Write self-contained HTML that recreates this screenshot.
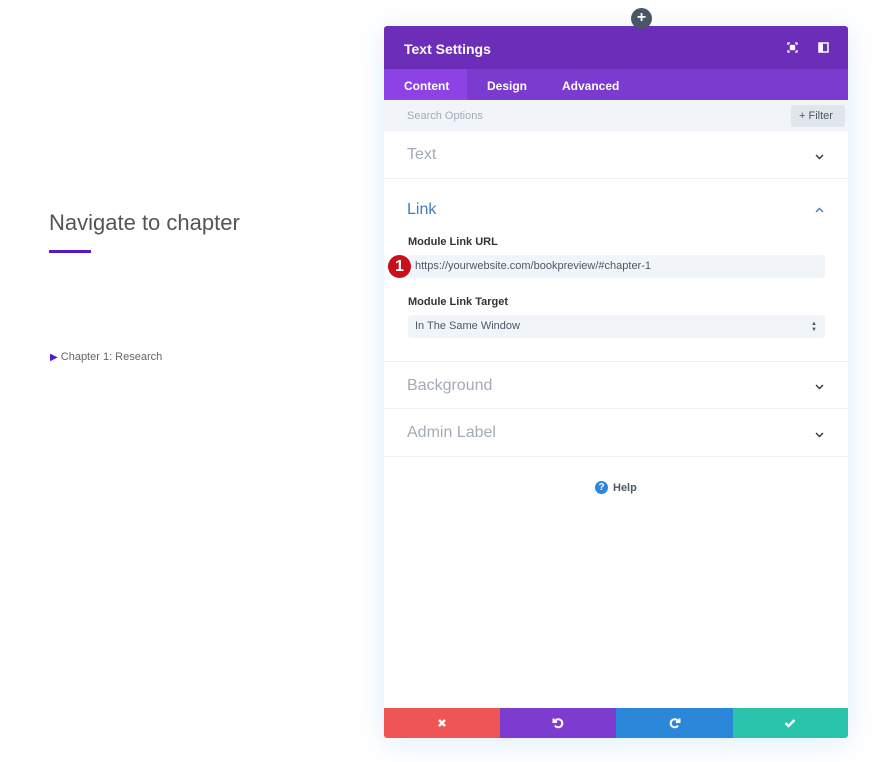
<!DOCTYPE html>
<html><head><style>
*{margin:0;padding:0;box-sizing:border-box}
body{width:880px;height:762px;background:#fff;font-family:"Liberation Sans",sans-serif;position:relative;overflow:hidden}
.a{position:absolute}
.panel{left:384px;top:26px;width:464px;height:712px;background:#fff;box-shadow:0 5px 30px rgba(43,135,218,.15);border-radius:3px;overflow:hidden}
.sec{position:absolute;left:0;width:464px;border-bottom:1px solid #eef1f5}
.st{position:absolute;left:23px;font-size:16px;color:#a3abb7}
.chev{position:absolute;left:431px}
</style></head><body>
<div class="a" style="left:49px;top:210px;font-size:22px;color:#555">Navigate to chapter</div>
<div class="a" style="left:49px;top:250px;width:42px;height:3px;background:#5419c9"></div>
<div class="a" style="left:50px;top:351px;font-size:11px;color:#666"><span style="color:#5419c9;font-size:10px">&#9654;</span> Chapter 1: Research</div>

<div class="a panel">
 <div class="a" style="left:0;top:0;width:464px;height:43px;background:#6c2eb9"></div>
 <div class="a" style="left:20px;top:15px;color:#fff;font-size:14px;font-weight:bold">Text Settings</div>
 <svg class="a" style="left:403px;top:16px" width="11" height="11" viewBox="0 0 11 11" fill="none" stroke="#fff" stroke-width="1.3"><path d="M1 3V1H3M8 1H10V3M10 8V10H8M3 10H1V8"/><rect x="3.5" y="3.5" width="4" height="4" fill="#fff"/></svg>
 <svg class="a" style="left:434px;top:16px" width="11" height="11" viewBox="0 0 11 11"><rect x="1" y="1" width="9" height="9" fill="none" stroke="#fff" stroke-width="1.5"/><rect x="1" y="1" width="4" height="9" fill="#fff"/></svg>
 <div class="a" style="left:0;top:43px;width:464px;height:31px;background:#7b3bcf"></div>
 <div class="a" style="left:0;top:43px;width:83px;height:31px;background:#8d42e6"></div>
 <div class="a" style="left:20px;top:53px;color:#fff;font-size:12px;font-weight:bold">Content</div>
 <div class="a" style="left:103px;top:53px;color:#fff;font-size:12px;font-weight:bold">Design</div>
 <div class="a" style="left:178px;top:53px;color:#fff;font-size:12px;font-weight:bold">Advanced</div>
 <div class="a" style="left:0;top:74px;width:464px;height:31px;background:#f1f5f9"></div>
 <div class="a" style="left:23px;top:84px;color:#a3abb7;font-size:11px">Search Options</div>
 <div class="a" style="left:407px;top:79px;width:54px;height:22px;background:#e1e6ec;border-radius:3px;color:#4c5866;font-size:11px;padding:5px 0 0 8px">+ Filter</div>

 <div class="sec" style="top:105px;height:48px"></div>
 <div class="st" style="top:120px">Text</div>
 <svg class="chev" style="top:128px" width="9" height="6" viewBox="0 0 9 6"><path d="M1 1L4.5 4.5 8 1" fill="none" stroke="#333" stroke-width="1.4"/></svg>

 <div class="sec" style="top:153px;height:183px"></div>
 <div class="st" style="top:175px;color:#3d7fbf">Link</div>
 <svg class="chev" style="top:181px" width="9" height="6" viewBox="0 0 9 6"><path d="M1 5L4.5 1.5 8 5" fill="none" stroke="#3d7fbf" stroke-width="1.4"/></svg>
 <div class="a" style="left:24px;top:210px;font-size:11px;font-weight:bold;color:#333">Module Link URL</div>
 <div class="a" style="left:24px;top:229px;width:417px;height:23px;background:#f1f5f9;border-radius:3px"></div>
 <div class="a" style="left:31px;top:234px;font-size:11px;color:#4c5866">https://yourwebsite.com/bookpreview/#chapter-1</div>
 <div class="a" style="left:4px;top:229px;width:23px;height:23px;border-radius:50%;background:#c8101a;color:#fff;font-size:16px;font-weight:bold;text-align:center;line-height:23px">1</div>
 <div class="a" style="left:24px;top:270px;font-size:11px;font-weight:bold;color:#333">Module Link Target</div>
 <div class="a" style="left:24px;top:289px;width:417px;height:23px;background:#f1f5f9;border-radius:3px"></div>
 <div class="a" style="left:31px;top:294px;font-size:11px;color:#4c5866">In The Same Window</div>
 <div class="a" style="left:427px;top:295px;font-size:6px;color:#4c5866;line-height:6px">&#9650;<br>&#9660;</div>

 <div class="sec" style="top:336px;height:47px"></div>
 <div class="st" style="top:351px">Background</div>
 <svg class="chev" style="top:358px" width="9" height="6" viewBox="0 0 9 6"><path d="M1 1L4.5 4.5 8 1" fill="none" stroke="#333" stroke-width="1.4"/></svg>
 <div class="sec" style="top:383px;height:48px"></div>
 <div class="st" style="top:398px">Admin Label</div>
 <svg class="chev" style="top:406px" width="9" height="6" viewBox="0 0 9 6"><path d="M1 1L4.5 4.5 8 1" fill="none" stroke="#333" stroke-width="1.4"/></svg>

 <div class="a" style="left:211px;top:455px;width:13px;height:13px;border-radius:50%;background:#2b87da;color:#fff;font-size:10px;font-weight:bold;text-align:center;line-height:13px">?</div>
 <div class="a" style="left:229px;top:456px;font-size:11px;font-weight:bold;color:#4c5866">Help</div>

 <div class="a" style="left:0;top:682px;width:116px;height:30px;background:#ef5555"></div>
 <div class="a" style="left:116px;top:682px;width:116px;height:30px;background:#7e3bd0"></div>
 <div class="a" style="left:232px;top:682px;width:117px;height:30px;background:#2b87da"></div>
 <div class="a" style="left:349px;top:682px;width:115px;height:30px;background:#29c4a9"></div>
 <svg class="a" style="left:53px;top:692px" width="10" height="10" viewBox="0 0 10 10"><path d="M2 2L8 8M8 2L2 8" stroke="#fff" stroke-width="2.4"/></svg>
 <svg class="a" style="left:168px;top:691px" width="12" height="12" viewBox="0 0 12 12" fill="none" stroke="#fff" stroke-width="2"><path d="M3 4A4 4 0 1 1 3 8.5"/><path d="M1.5 1.5V5H5" fill="none"/></svg>
 <svg class="a" style="left:285px;top:691px" width="12" height="12" viewBox="0 0 12 12" fill="none" stroke="#fff" stroke-width="2"><path d="M9 4A4 4 0 1 0 9 8.5"/><path d="M10.5 1.5V5H7"/></svg>
 <svg class="a" style="left:400px;top:692px" width="12" height="10" viewBox="0 0 12 10"><path d="M1.5 5L4.5 8 10.5 2" fill="none" stroke="#fff" stroke-width="2.4"/></svg>
</div>
<div class="a" style="left:631px;top:8px;width:21px;height:21px;border-radius:50%;background:#4a5567;color:#fff;font-size:16px;font-weight:bold;text-align:center;line-height:20px">+</div>
</body></html>
